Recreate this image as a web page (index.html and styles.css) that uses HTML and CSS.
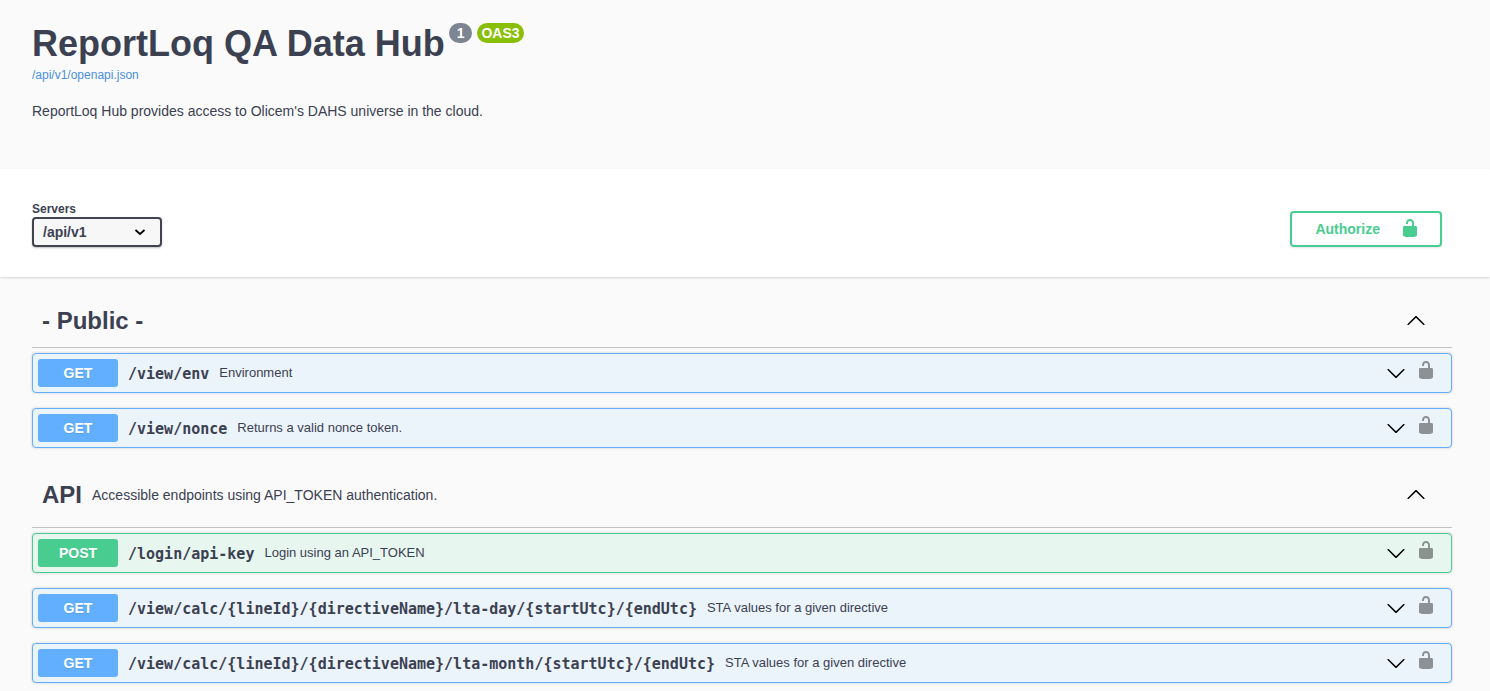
FILE: index.html
```html
<!DOCTYPE html>
<html lang="en">
<head>
    <meta charset="UTF-8">
    <title>ReportLoq QA Data Hub</title>
    <link rel="stylesheet" href="styles.css">
</head>
<body>

<!-- shared icons -->
<svg class="sprite" aria-hidden="true">
    <symbol id="unlocked" viewBox="0 0 20 20">
        <path d="M15.8 8H14V5.6C14 2.703 12.665 1 10 1 7.334 1 6 2.703 6 5.6V6h2v-.801C8 3.754 8.797 3 10 3c1.203 0 2 .754 2 2.199V8H4c-.553 0-1 .646-1 1.199V17c0 .549.428 1.139.951 1.307l1.197.387C5.672 18.861 6.55 19 7.1 19h5.8c.549 0 1.428-.139 1.951-.307l1.196-.387c.524-.167.953-.757.953-1.306V9.199C17 8.646 16.352 8 15.8 8z"/>
    </symbol>
    <symbol id="arrow-up" viewBox="0 0 20 20">
        <path d="M17.418 14.908c.272.268.709.268.979 0s.271-.701 0-.969l-7.908-7.83c-.27-.268-.707-.268-.979 0l-7.908 7.83c-.27.268-.27.701 0 .969.271.268.709.268.979 0L10 7.767l7.418 7.141z"/>
    </symbol>
    <symbol id="arrow-down" viewBox="0 0 20 20">
        <path d="M17.418 6.109c.272-.268.709-.268.979 0s.271.701 0 .969l-7.908 7.83c-.27.268-.707.268-.979 0l-7.908-7.83c-.27-.268-.27-.701 0-.969.271-.268.709-.268.979 0L10 13.25l7.418-7.141z"/>
    </symbol>
</svg>

<header class="info wrapper">
    <h1 class="title">ReportLoq QA Data Hub
        <span class="badges">
            <span class="badge">1</span>
            <span class="badge oas">OAS3</span>
        </span>
    </h1>
    <a class="link" href="/api/v1/openapi.json">/api/v1/openapi.json</a>
    <p class="description">ReportLoq Hub provides access to Olicem's DAHS universe in the cloud.</p>
</header>

<div class="scheme-container">
    <section class="schemes wrapper">
        <div class="servers">
            <label class="servers-title" for="servers">Servers</label>
            <div class="select-box">
                <select id="servers">
                    <option value="/api/v1">/api/v1</option>
                </select>
                <svg class="select-arrow" viewBox="0 0 12 8" aria-hidden="true"><path d="M1.500 2L6 6l4.500-4" stroke-width="1.700"/></svg>
            </div>
        </div>
        <button type="button" class="authorize">
            <span>Authorize</span>
            <svg class="icon"><use href="#unlocked"/></svg>
        </button>
    </section>
</div>

<main class="wrapper operations">
    <section class="tag-section">
        <div class="tag">
            <h2>- Public -</h2>
            <button type="button" class="icon-btn tag-toggle" aria-label="Collapse Public"><svg class="icon"><use href="#arrow-up"/></svg></button>
        </div>
        <div class="opblock get">
            <span class="method">GET</span>
            <a class="path" href="#env">/view/env</a>
            <span class="summary">Environment</span>
            <button type="button" class="icon-btn" aria-label="Expand"><svg class="icon"><use href="#arrow-down"/></svg></button>
            <button type="button" class="icon-btn lock" aria-label="Authorization"><svg class="icon"><use href="#unlocked"/></svg></button>
        </div>
        <div class="opblock get">
            <span class="method">GET</span>
            <a class="path" href="#nonce">/view/nonce</a>
            <span class="summary">Returns a valid nonce token.</span>
            <button type="button" class="icon-btn" aria-label="Expand"><svg class="icon"><use href="#arrow-down"/></svg></button>
            <button type="button" class="icon-btn lock" aria-label="Authorization"><svg class="icon"><use href="#unlocked"/></svg></button>
        </div>
    </section>

    <section class="tag-section">
        <div class="tag">
            <h2>API</h2>
            <p>Accessible endpoints using API_TOKEN authentication.</p>
            <button type="button" class="icon-btn tag-toggle" aria-label="Collapse API"><svg class="icon"><use href="#arrow-up"/></svg></button>
        </div>
        <div class="opblock post">
            <span class="method">POST</span>
            <a class="path" href="#login">/login/api-key</a>
            <span class="summary">Login using an API_TOKEN</span>
            <button type="button" class="icon-btn" aria-label="Expand"><svg class="icon"><use href="#arrow-down"/></svg></button>
            <button type="button" class="icon-btn lock" aria-label="Authorization"><svg class="icon"><use href="#unlocked"/></svg></button>
        </div>
        <div class="opblock get">
            <span class="method">GET</span>
            <a class="path" href="#lta-day">/view/calc/{lineId}/{directiveName}/lta-day/{startUtc}/{endUtc}</a>
            <span class="summary">STA values for a given directive</span>
            <button type="button" class="icon-btn" aria-label="Expand"><svg class="icon"><use href="#arrow-down"/></svg></button>
            <button type="button" class="icon-btn lock" aria-label="Authorization"><svg class="icon"><use href="#unlocked"/></svg></button>
        </div>
        <div class="opblock get">
            <span class="method">GET</span>
            <a class="path" href="#lta-month">/view/calc/{lineId}/{directiveName}/lta-month/{startUtc}/{endUtc}</a>
            <span class="summary">STA values for a given directive</span>
            <button type="button" class="icon-btn" aria-label="Expand"><svg class="icon"><use href="#arrow-down"/></svg></button>
            <button type="button" class="icon-btn lock" aria-label="Authorization"><svg class="icon"><use href="#unlocked"/></svg></button>
        </div>
    </section>
</main>

</body>
</html>
```
FILE: styles.css
```css
* {
    box-sizing: border-box;
}

body {
    margin: 0;
    background: #fafafa;
    color: #3b4151;
    font-family: "Liberation Sans", Arial, sans-serif;
    font-size: 14px;
    line-height: 20px;
}

h1, h2, p {
    margin: 0;
}

button, select {
    font-family: inherit;
    cursor: pointer;
}

.sprite {
    display: none;
}

.icon {
    display: block;
    width: 20px;
    height: 20px;
    fill: currentColor;
}

.wrapper {
    padding: 0 38px 0 32px;
}

/* header */
.info {
    padding-top: 23px;
    padding-bottom: 48px;
}

.title {
    display: flex;
    align-items: flex-start;
    gap: 4px;
    font-size: 36px;
    line-height: 42px;
}

.badges {
    display: flex;
    gap: 5px;
}

.badge {
    padding: 0 8px;
    border-radius: 10px;
    background: #7d8492;
    color: #fff;
    font-size: 14px;
    line-height: 20px;
}

.badge.oas {
    padding: 0 4px;
    background: #89bf04;
}

.link {
    display: block;
    color: #4990e2;
    font-size: 12px;
    text-decoration: none;
}

.description {
    padding-top: 16px;
}

/* servers and authorize */
.scheme-container {
    padding: 32px 0 30px;
    background: #fff;
    box-shadow: 0 1px 2px rgba(0,0,0,.15);
}

.schemes {
    display: flex;
    justify-content: space-between;
    align-items: flex-end;
    padding-right: 48px;
}

.servers-title {
    display: block;
    font-size: 12px;
    font-weight: bold;
    line-height: 16px;
}

.select-box {
    position: relative;
    width: 130px;
}

.select-box select {
    display: block;
    width: 100%;
    height: 30px;
    padding: 0 9px;
    border: 2px solid #41444e;
    border-radius: 4px;
    background: #f7f7f7;
    box-shadow: 0 1px 2px rgba(0,0,0,.25);
    color: #3b4151;
    font-size: 14px;
    font-weight: bold;
    appearance: none;
}

.select-arrow {
    position: absolute;
    top: 11px;
    right: 16px;
    width: 12px;
    height: 8px;
    fill: none;
    stroke: #000;
    pointer-events: none;
}

.authorize {
    display: flex;
    gap: 20px;
    height: 36px;
    padding: 5px 20px 0 23px;
    border: 2px solid #49cc90;
    border-radius: 4px;
    background: transparent;
    box-shadow: 0 1px 2px rgba(0,0,0,.1);
    color: #49cc90;
    font-size: 14px;
    font-weight: bold;
    line-height: 22px;
}

/* operations */
.operations {
    padding-top: 18px;
}

.tag {
    display: flex;
    align-items: center;
    gap: 10px;
    margin-bottom: 5px;
    padding: 10px 26px 10px 10px;
    border-bottom: 1px solid rgba(59,65,81,.3);
}

.tag h2 {
    font-size: 24px;
    line-height: 32px;
}

.tag p {
    padding: 12px 0;
}

.tag-toggle {
    margin-left: auto;
    margin-bottom: 2px;
}

.icon-btn {
    flex: none;
    padding: 0;
    border: none;
    background: none;
    color: #000;
}

.opblock {
    display: flex;
    align-items: center;
    gap: 10px;
    height: 40px;
    margin-bottom: 15px;
    padding: 5px 15px 5px 5px;
    border: 1px solid;
    border-radius: 4px;
    box-shadow: 0 0 3px rgba(0,0,0,.19);
}

.get {
    border-color: #61affe;
    background: #ebf3fb;
}

.post {
    border-color: #49cc90;
    background: #e8f6f0;
}

.method {
    flex: none;
    width: 80px;
    border-radius: 3px;
    background: #61affe;
    color: #fff;
    font-weight: bold;
    line-height: 28px;
    text-align: center;
    text-shadow: 0 1px 0 rgba(0,0,0,.1);
}

.post .method {
    background: #49cc90;
}

.path {
    padding-top: 2px;
    color: #3b4151;
    font-family: "DejaVu Sans Mono", monospace;
    font-size: 15px;
    font-weight: bold;
    text-decoration: none;
}

.summary {
    flex: 1;
    font-size: 13px;
}

.lock {
    margin-bottom: 6px;
    opacity: .4;
}
```
